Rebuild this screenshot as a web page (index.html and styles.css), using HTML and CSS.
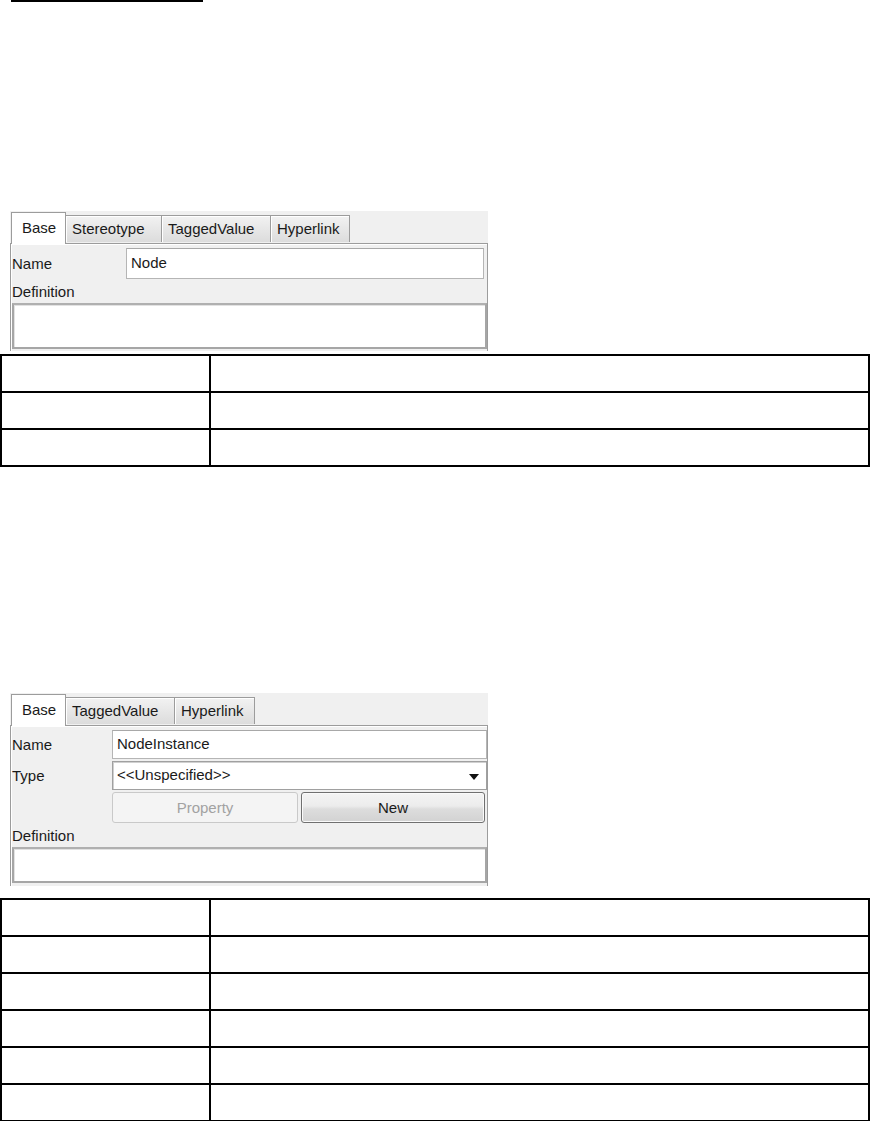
FILE: index.html
```html
<!DOCTYPE html>
<html>
<head>
<meta charset="utf-8">
<link rel="stylesheet" href="styles.css">
</head>
<body>
<div class="page">
  <div class="rule"></div>

  <section class="dlg dlg1">
    <div class="tabs">
      <div class="tab active">Base</div>
      <div class="tab">Stereotype</div>
      <div class="tab">TaggedValue</div>
      <div class="tab">Hyperlink</div>
    </div>
    <div class="body">
      <div class="row name-row">
        <span class="lbl">Name</span>
        <div class="field">Node</div>
      </div>
      <div class="lbl def">Definition</div>
      <div class="area"></div>
    </div>
  </section>

  <table class="grid grid1">
    <tr><td class="c1"></td><td></td></tr>
    <tr><td class="c1"></td><td></td></tr>
    <tr><td class="c1"></td><td></td></tr>
  </table>

  <section class="dlg dlg2">
    <div class="tabs">
      <div class="tab active">Base</div>
      <div class="tab">TaggedValue</div>
      <div class="tab">Hyperlink</div>
    </div>
    <div class="body">
      <div class="row name-row">
        <span class="lbl">Name</span>
        <div class="field">NodeInstance</div>
      </div>
      <div class="row type-row">
        <span class="lbl">Type</span>
        <div class="field combo">&lt;&lt;Unspecified&gt;&gt;<span class="arrow"></span></div>
      </div>
      <div class="row btn-row">
        <span class="lbl"></span>
        <div class="btns">
          <div class="btn disabled">Property</div>
          <div class="btn">New</div>
        </div>
      </div>
      <div class="lbl def">Definition</div>
      <div class="area"></div>
    </div>
  </section>

  <table class="grid grid2">
    <tr><td class="c1"></td><td></td></tr>
    <tr><td class="c1"></td><td></td></tr>
    <tr><td class="c1"></td><td></td></tr>
    <tr><td class="c1"></td><td></td></tr>
    <tr><td class="c1"></td><td></td></tr>
    <tr><td class="c1"></td><td></td></tr>
  </table>
</div>
</body>
</html>
```

FILE: styles.css
```css
html, body {
  margin: 0;
  padding: 0;
  background: #ffffff;
}

.page {
  font-family: "Liberation Sans", Arial, sans-serif;
  font-size: 15px;
  color: #1a1a1a;
  display: flex;
  flex-direction: column;
  align-items: flex-start;
}

.rule {
  margin-left: 11px;
  width: 192px;
  height: 2px;
  background: #000;
}

/* ---------- dialog ---------- */
.dlg {
  margin-left: 10px;
  width: 478px;
  background: #f0f0f0;
  display: flex;
  flex-direction: column;
}

.dlg1 { margin-top: 209px; height: 140px; }
.dlg2 { margin-top: 226px; height: 193px; }

.tabs {
  display: flex;
  align-items: flex-end;
  height: 32px;
  padding-left: 1px;
  position: relative;
  z-index: 1;
}

.tab {
  height: 27px;
  line-height: 26px;
  padding: 0 6px;
  margin-left: -1px;
  border: 1px solid #9c9c9c;
  border-bottom: none;
  background: linear-gradient(#f2f2f2, #dcdcdc);
  box-shadow: inset 1px 1px 0 #ffffff;
  box-sizing: border-box;
  margin-bottom: 1px;
  color: #1a1a1a;
}

.tab.active {
  height: 32px;
  line-height: 30px;
  padding: 0 10px;
  background: #ffffff;
  margin-bottom: -1px;
  margin-left: 0;
  border-color: #9c9c9c;
  box-shadow: none;
}

.dlg1 .tab.active { width: 55px; }
.dlg1 .tab:nth-child(2) { width: 97px; }
.dlg1 .tab:nth-child(3) { width: 110px; }
.dlg1 .tab:nth-child(4) { width: 80px; }

.dlg2 .tab.active { width: 55px; }
.dlg2 .tab:nth-child(2) { width: 110px; }
.dlg2 .tab:nth-child(3) { width: 81px; }

.body {
  flex: 1;
  border: 1px solid #9c9c9c;
  border-bottom: none;
  box-shadow: inset 1px 1px 0 #ffffff;
  display: flex;
  flex-direction: column;
  padding: 4px 1px 0 1px;
}

.row {
  display: grid;
  align-items: center;
}

.dlg1 .row { grid-template-columns: 114px 358px; }
.dlg2 .row { grid-template-columns: 100px 375px; }

.lbl {
  line-height: 18px;
}

.field {
  height: 31px;
  box-sizing: border-box;
  background: #ffffff;
  border: 1px solid #b5b5b5;
  border-top-color: #a8a8a8;
  padding: 0 4px;
  line-height: 28px;
  white-space: nowrap;
}

.dlg2 .field { height: 29px; line-height: 26px; }

.def {
  margin-top: 4px;
  line-height: 18px;
}

.area {
  margin-top: 2px;
  background: #ffffff;
  border: 2px solid #a6a6a6;
  border-top-color: #b0b0b0;
  box-shadow: inset 1px 1px 0 #e2e2e2;
  box-sizing: border-box;
  width: 475px;
}

.dlg1 .area { height: 46px; }
.dlg2 .area { height: 36px; }

.dlg2 .type-row { margin-top: 2px; }
.combo {
  position: relative;
  border-color: #a0a0a0;
  box-shadow: inset 1px 1px 0 #d0d0d0;
}
.combo .arrow {
  position: absolute;
  right: 7px;
  top: 12px;
  width: 0;
  height: 0;
  border-left: 5px solid transparent;
  border-right: 5px solid transparent;
  border-top: 6px solid #111;
}

.btn-row { margin-top: 2px; }
.btns {
  display: grid;
  grid-template-columns: 186px 184px;
  gap: 3px;
}
.btn {
  height: 31px;
  box-sizing: border-box;
  border: 1px solid #707070;
  border-radius: 3px;
  background: linear-gradient(#f4f4f4 0%, #ececec 45%, #dddddd 55%, #d2d2d2 100%);
  box-shadow: inset 0 0 0 1px #fafafa;
  text-align: center;
  line-height: 29px;
  color: #1a1a1a;
}
.btn.disabled {
  border-color: #c9c9c9;
  background: #f4f4f4;
  box-shadow: none;
  color: #a2a2a2;
}

/* ---------- tables ---------- */
.grid {
  border-collapse: collapse;
  width: 870px;
  table-layout: fixed;
}
.grid1 { margin-top: 3px; }
.grid2 { margin-top: 12px; }

.grid td {
  border: 2px solid #000;
  height: 35px;
  padding: 0;
}
.grid td.c1 { width: 207px; }
```
